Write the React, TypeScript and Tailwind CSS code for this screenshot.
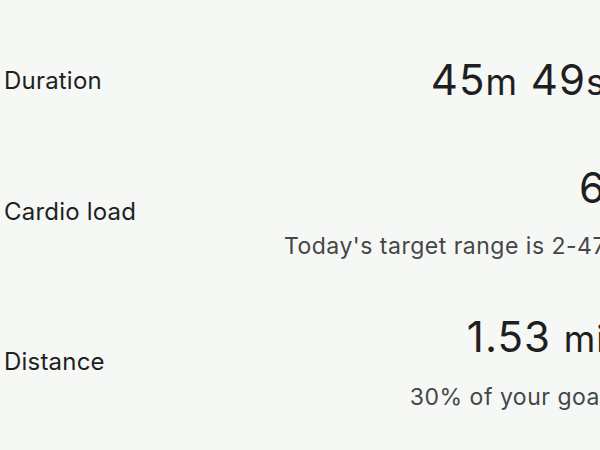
const font = { fontFamily: 'Inter, "Open Sans", "Liberation Sans", sans-serif' };

function Metric({
  label,
  value,
  note,
  className,
}: {
  label: string;
  value: React.ReactNode;
  note?: string;
  className?: string;
}) {
  return (
    <div className={`flex items-center justify-between ${className ?? ""}`}>
      <div className="text-[24px] leading-[32px] tracking-[0.2px] text-[#1f1f1f]">{label}</div>
      <div className="flex flex-col items-end">
        <div className="text-[42px] leading-[48px] tracking-[1px] text-[#1f1f1f] whitespace-nowrap">
          {value}
        </div>
        {note && (
          <div className="mt-[20px] text-[23px] leading-[28px] tracking-[0.5px] text-[#444746] whitespace-nowrap">
            {note}
          </div>
        )}
      </div>
    </div>
  );
}

export default function App() {
  return (
    <div className="h-[450px] w-[600px] overflow-hidden bg-[#f6f8f6]" style={font}>
      <div className="w-[606px] pl-[4px] pt-[56px]">
        <Metric
          label="Duration"
          value={
            <>
              45<span className="text-[36px]">m</span> 49<span className="text-[36px]">s</span>
            </>
          }
        />
        <Metric className="mt-[58px]" label="Cardio load" value="6" note="Today's target range is 2-47" />
        <Metric
          className="mt-[53px]"
          label="Distance"
          value={
            <>
              1.53 <span className="text-[36px]">mi</span>
            </>
          }
          note="30% of your goal"
        />
      </div>
    </div>
  );
}
